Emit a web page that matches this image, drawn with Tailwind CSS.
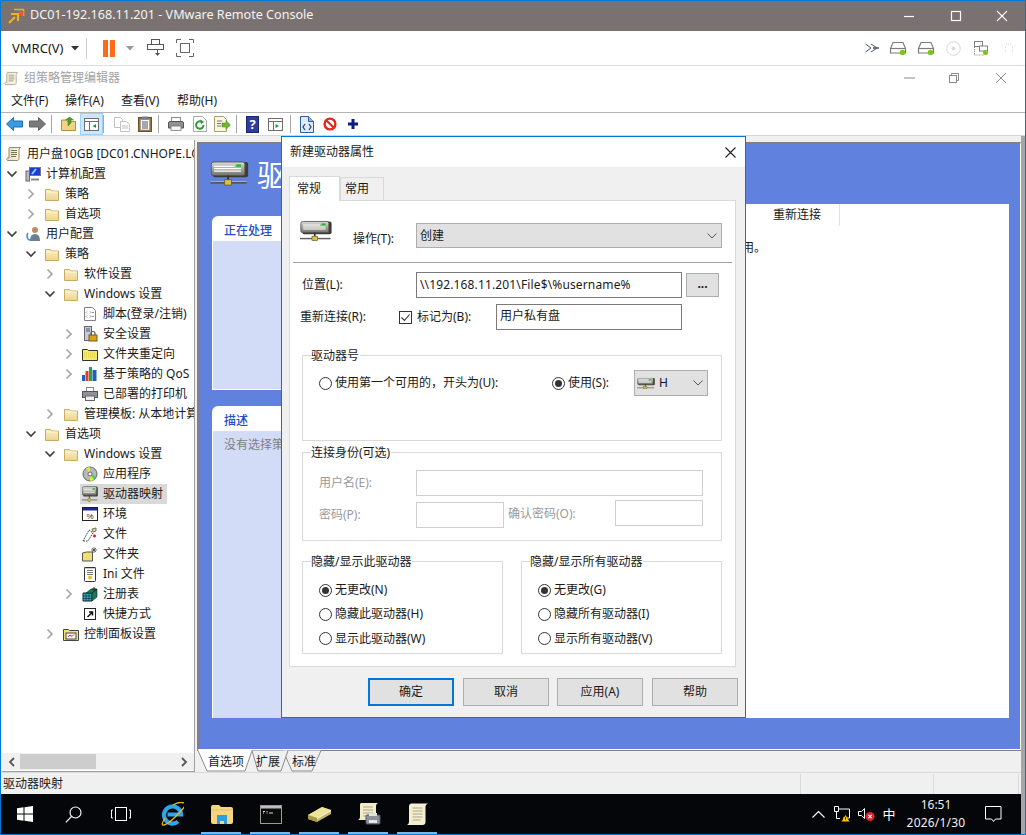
<!DOCTYPE html>
<html lang="zh-CN">
<head>
<meta charset="utf-8">
<title>VMware Remote Console</title>
<script src="https://cdn.jsdelivr.net/npm/@tailwindcss/browser@4"></script>
</head>
<body class="relative w-[1026px] h-[835px] overflow-hidden border border-[#0078d7] bg-white text-[12px] leading-none text-[#1a1a1a] font-['Noto_Sans','Noto_Sans_CJK_SC',sans-serif]">

<svg class="absolute w-0 h-0" aria-hidden="true">
  <defs>
    <linearGradient id="gd" x1="0" y1="0" x2="0" y2="1"><stop offset="0" stop-color="#dcdcd8"/><stop offset="1" stop-color="#74746e"/></linearGradient>
    <linearGradient id="gf" x1="0" y1="0" x2="0" y2="1"><stop offset="0" stop-color="#fbeec4"/><stop offset="1" stop-color="#efd48e"/></linearGradient>
    <linearGradient id="gs" x1="0" y1="0" x2="1" y2="0"><stop offset="0" stop-color="#e8dfb8"/><stop offset="1" stop-color="#fbf6df"/></linearGradient>
    <symbol id="chevR" viewBox="0 0 12 12"><path d="M3.5 1.5 8 6l-4.500 4.500" fill="none" stroke="#a6a6a6" stroke-width="1.700"/></symbol>
    <symbol id="chevD" viewBox="0 0 12 12"><path d="M1.500 3.500 6 8l4.500-4.500" fill="none" stroke="#404040" stroke-width="1.700"/></symbol>
    <symbol id="folder" viewBox="0 0 16 16"><path d="M1.500 3.500h5l1 1.500h7v9.500h-13z" fill="url(#gf)" stroke="#c9aa68"/><path d="M2.500 6h11" stroke="#fff8e0"/></symbol>
    <symbol id="scroll" viewBox="0 0 16 16"><path d="M4 1.500h10.500c-1.500 1-1.500 2-1.500 3v8c0 1.500-1 2-2 2H1.500c-1-.5-1-2 0-2.500H3V3c0-1 0-1.500 1-1.500z" fill="url(#gs)" stroke="#8f8a70"/><path d="M5 4.500h6M5 6.500h6M5 8.500h6M5 10.500h5" stroke="#77765f"/></symbol>
    <symbol id="drive" viewBox="0 0 40 26"><path d="M3 4.500Q3 1 6 1h31q2.500 0 2.500 3v10.500q0 2.500-2.500 2.500H5q-2 0-2-2z" fill="#3c3c38"/><path d="M1 3.500Q1 1 4 1h30q2 0 2 2.500v9.500q0 2-2 2H3q-2 0-2-2z" fill="url(#gd)" stroke="#55554f"/><path d="M4 5.500h21M4 8h28M4 10.500h28" stroke="#fff" stroke-width="1.300"/><rect x="27" y="3.500" width="5" height="2.500" fill="#18c020"/><path d="M18.500 15v7" stroke="#333" stroke-width="2"/><path d="M0 22.500h38" stroke="#444" stroke-width="1.600"/><path d="M0 21.500h38" stroke="#ccc" stroke-width=".800"/><rect x="15" y="19.500" width="7" height="5.500" fill="#d9c04c" stroke="#6a5a10" stroke-width=".800"/></symbol>
    <symbol id="doc" viewBox="0 0 16 16"><path d="M2.500 1.500h8l3 3v10h-11z" fill="#fff" stroke="#808080"/></symbol>
    <symbol id="green" viewBox="0 0 18 16"><path d="M4 2.500h10l2.500 6v4.500h-15V8.500z" fill="none" stroke="#7d7d7d" stroke-width="1.200"/><path d="M1.500 8.500h15" stroke="#7d7d7d" stroke-width="1.200"/><circle cx="13.500" cy="12.500" r="2.700" fill="#7ec31c"/></symbol>
  </defs>
</svg>

<!-- VMRC title bar -->
<header class="h-[30px] bg-[#7a7270] flex items-center text-[#f4f4f4] text-[12.6px]">
  <svg class="ml-[7px] w-[17px] h-[17px]" viewBox="0 0 17 17"><path d="M1 15 7 9M3 6h7v7" fill="none" stroke="#f4b01a" stroke-width="2.200"/><path d="M6 1.500h9.500V8" fill="none" stroke="#f4b01a" stroke-width="1.600"/><rect x="11" y="3" width="4.500" height="4.500" fill="#f0553a"/></svg>
  <span class="ml-[5px] -mt-[1px]">DC01-192.168.11.201 - VMware Remote Console</span>
  <div class="ml-auto flex items-center h-full">
    <svg class="w-[46px] h-[30px]" viewBox="0 0 46 30"><path d="M17 15.500h10" stroke="#fff" stroke-width="1.200"/></svg>
    <svg class="w-[46px] h-[30px]" viewBox="0 0 46 30"><rect x="18.500" y="10.500" width="9" height="9" fill="none" stroke="#fff" stroke-width="1.200"/></svg>
    <svg class="w-[46px] h-[30px]" viewBox="0 0 46 30"><path d="M18 10l10 10M28 10 18 20" stroke="#fff" stroke-width="1.100"/></svg>
  </div>
</header>

<!-- VMRC toolbar -->
<div class="h-[35px] border-b border-[#dcdcdc] flex items-center">
  <span class="ml-[11px] text-[13px]">VMRC(V)</span>
  <svg class="ml-[7px] w-[8px] h-[5px]" viewBox="0 0 8 5"><path d="M0 0h8L4 4.500z" fill="#333"/></svg>
  <div class="ml-[7px] w-px h-[21px] bg-[#cfcfcf]"></div>
  <div class="ml-[16px] flex gap-[2px]"><div class="w-[5px] h-[17px] bg-[#ff6a1a]"></div><div class="w-[5px] h-[17px] bg-[#ff6a1a]"></div></div>
  <svg class="ml-[11px] w-[8px] h-[5px]" viewBox="0 0 8 5"><path d="M0 0h8L4 4.500z" fill="#999"/></svg>
  <svg class="ml-[13px] w-[18px] h-[18px]" viewBox="0 0 18 18" fill="none" stroke="#555"><rect x="4.500" y=".500" width="8" height="5"/><rect x=".500" y="5.500" width="16" height="5"/><path d="M10.500 11v4"/><path d="M8 14h5l-2.500 3z" fill="#555" stroke="none"/></svg>
  <svg class="ml-[11px] w-[18px] h-[18px]" viewBox="0 0 18 18" fill="none" stroke="#666"><path d="M.5 4V.5H5M13 .5h4.500V4M17.500 14v3.500H13M5 17.500H.5V14"/><rect x="4.500" y="4.500" width="9" height="9"/></svg>
  <div class="ml-auto flex items-center">
    <svg class="w-[15px] h-[10px]" viewBox="0 0 15 10" fill="none" stroke="#44546a"><path d="M.5 1 6 5 .5 9M6 1l6 4-6 4"/><path d="M8 5h6" stroke-width="1.500"/></svg>
    <svg class="ml-[9px] w-[18px] h-[16px]" viewBox="0 0 18 16"><use href="#green"/></svg>
    <svg class="ml-[10px] w-[18px] h-[16px]" viewBox="0 0 18 16"><use href="#green"/></svg>
    <svg class="ml-[11px] w-[15px] h-[15px]" viewBox="0 0 15 15" fill="none" stroke="#d8d8d8"><circle cx="7.500" cy="7.500" r="6.800"/><circle cx="7.500" cy="7.500" r="1.500" fill="#d8d8d8"/></svg>
    <svg class="ml-[13px] w-[15px] h-[15px]" viewBox="0 0 15 15" fill="none" stroke="#808080"><rect x=".500" y=".500" width="8" height="5"/><rect x="5.500" y="5" width="8" height="5" fill="#fff"/><path d="M.5 6v8h9" stroke-dasharray="1 1"/><circle cx="11.500" cy="11.500" r="2.500" fill="#7ec31c" stroke="none"/></svg>
    <svg class="ml-[13px] mr-[9px] w-[14px] h-[10px]" viewBox="0 0 14 10" fill="none" stroke="#ddd" stroke-dasharray="1 1"><path d="M.5 3h3v6M13.500 3h-3v6M4 1h6"/></svg>
  </div>
</div>

<!-- MMC title -->
<div class="h-[24px] flex items-center">
  <svg class="ml-[3px] w-[15px] h-[15px] opacity-70" viewBox="0 0 16 16"><use href="#scroll"/></svg>
  <span class="ml-[5px] text-[#a3a3a3]">组策略管理编辑器</span>
  <div class="ml-auto flex items-center text-[#8a8a8a]">
    <svg class="w-[12px] h-[2px]" viewBox="0 0 12 2"><path d="M0 1h11" stroke="#9a9a9a" stroke-width="1.200"/></svg>
    <svg class="ml-[33px] w-[10px] h-[10px]" viewBox="0 0 10 10" fill="none" stroke="#8a8a8a"><rect x=".500" y="2.500" width="7" height="7"/><path d="M2.500 2.500v-2h7v7h-2"/></svg>
    <svg class="ml-[37px] mr-[19px] w-[10px] h-[10px]" viewBox="0 0 10 10" fill="none" stroke="#8a8a8a"><path d="M0 0l10 10M10 0 0 10"/></svg>
  </div>
</div>

<!-- menu -->
<nav class="h-[23px] border-b border-[#b4b4b4] flex items-center relative">
  <span class="ml-[10px] w-[54px]">文件(F)</span>
  <span class="w-[56px]">操作(A)</span>
  <span class="w-[56px]">查看(V)</span>
  <span>帮助(H)</span>
</nav>

<!-- MMC toolbar -->
<div class="h-[23px] border-b border-[#d4d4d4] flex items-center">
  <svg class="ml-[5px] w-[17px] h-[14px]" viewBox="0 0 17 14"><path d="M7.500.5v3.500h9v6h-9v3.500L.5 7z" fill="#3b9be0" stroke="#1d6fb0"/></svg>
  <svg class="ml-[6px] w-[17px] h-[14px]" viewBox="0 0 17 14"><path d="M9.500.5v3.500h-9v6h9v3.500L16.500 7z" fill="#7a7a7a" stroke="#666"/></svg>
  <div class="ml-[5px] w-px h-[18px] bg-[#a8a8a8]"></div>
  <svg class="ml-[9px] w-[15px] h-[14px]" viewBox="0 0 15 14"><path d="M.5 3h5l1 1.500h8v9H.5z" fill="#f1d286" stroke="#b0904a"/><path d="M7 9V3H4.500L8.500 0l4 3H10v3z" fill="#4ea020" stroke="#38801a" stroke-width=".500"/></svg>
  <div class="ml-[4px] w-[23px] h-[22px] bg-[#cce8ff] border border-[#99d1ff] flex items-center justify-center"><svg class="w-[15px] h-[13px]" viewBox="0 0 15 13" fill="none" stroke="#6d6d6d"><rect x=".500" y=".500" width="14" height="12" fill="#fff"/><path d="M.5 3.500h14M5.500 3.500v9" /><path d="M12 6v4L8.500 8z" fill="#1c9a3e" stroke="none"/></svg></div>
  <div class="w-px h-[18px] bg-[#a8a8a8]"></div>
  <svg class="ml-[10px] w-[16px] h-[15px] opacity-45" viewBox="0 0 16 15" fill="#fff" stroke="#777"><path d="M.5.500h6l2 2v8h-8z"/><path d="M6.500 4.500h6l3 3v7h-9z"/><path d="M8 9h6M8 11h6" /></svg>
  <svg class="ml-[8px] w-[14px] h-[16px]" viewBox="0 0 14 16"><rect x=".500" y="1.500" width="13" height="14" fill="#9c7440" stroke="#6f4e24"/><rect x="2.500" y="3.500" width="9" height="10.500" fill="#f8f8f8" stroke="#888" stroke-width=".500"/><rect x="4" y=".500" width="6" height="3" fill="#6d7f93"/><path d="M4 6h6M4 8h6M4 10h6M4 12h6" stroke="#556"/></svg>
  <div class="ml-[6px] w-px h-[18px] bg-[#a8a8a8]"></div>
  <svg class="ml-[9px] w-[16px] h-[14px]" viewBox="0 0 16 14"><rect x="3.500" y=".500" width="9" height="5" fill="#fff" stroke="#888"/><path d="M.5 6q0-1.500 1.500-1.500h12q1.500 0 1.500 1.500v5H.5z" fill="#8c9298" stroke="#555"/><rect x="3" y="9" width="10" height="4.500" fill="#f4f4f4" stroke="#666" stroke-width=".700"/></svg>
  <svg class="ml-[9px] w-[14px] h-[16px]" viewBox="0 0 14 16"><path d="M.5.500h9l4 4v11H.5z" fill="#fff" stroke="#aaa"/><path d="M10.500 9a3.700 3.700 0 1 1-1.500-3" fill="none" stroke="#2e9a30" stroke-width="2"/><path d="M7.500 3.500 11 6 8 8z" fill="#2e9a30"/></svg>
  <svg class="ml-[7px] w-[17px] h-[16px]" viewBox="0 0 17 16"><path d="M.5.500h9l3 3v12H.5z" fill="#fbf6df" stroke="#a8a070"/><path d="M3 5h5M3 7.500h4M3 10h4" stroke="#777"/><path d="M8 7h4V4.500L16.500 9 12 13.500V11H8z" fill="#6cb52d" stroke="#4b8a1c" stroke-width=".500"/></svg>
  <div class="ml-[5px] w-px h-[18px] bg-[#a8a8a8]"></div>
  <div class="ml-[9px] w-[13px] h-[17px] bg-[#2c3fa0] border border-[#1a2670] text-white text-[13px] font-bold flex items-center justify-center">?</div>
  <svg class="ml-[9px] w-[15px] h-[13px]" viewBox="0 0 15 13" fill="none" stroke="#6d6d6d"><rect x=".500" y=".500" width="14" height="12" fill="#fff"/><path d="M.5 3.500h14M5.500 3.500v9"/><path d="M7.500 6v4L11 8z" fill="#1c9a3e" stroke="none"/></svg>
  <div class="ml-[7px] w-px h-[18px] bg-[#a8a8a8]"></div>
  <svg class="ml-[9px] w-[14px] h-[17px]" viewBox="0 0 14 17"><path d="M.5.500h8l5 5v11H.5z" fill="#dfeaf8" stroke="#2f5f9a"/><path d="M8.500.5v5h5" fill="#8fb8e8" stroke="#2f5f9a"/><path d="M5 8 3 11l2 3M9 8l2 3-2 3" fill="none" stroke="#26406e" stroke-width="1.200"/></svg>
  <svg class="ml-[9px] w-[14px] h-[14px]" viewBox="0 0 14 14"><circle cx="7" cy="7" r="5.400" fill="#fff" stroke="#e0281e" stroke-width="2.400"/><path d="M3 3l8 8" stroke="#e0281e" stroke-width="2.200"/></svg>
  <svg class="ml-[11px] w-[10px] h-[10px]" viewBox="0 0 10 10"><path d="M3.500 0h3v3.500H10v3H6.500V10h-3V6.500H0v-3h3.500z" fill="#0a1a80"/></svg>
</div>

<!-- lower area with right strip -->
<div class="flex h-[698px]">
  <div class="w-[1020px] flex flex-col">
    <main class="h-[636px] bg-[#f0f0f0] flex pl-px">
      <!-- tree -->
      <aside class="mt-[4px] w-[193px] h-[632px] bg-white border-r border-b border-[#a0a0a0] flex flex-col">
        <div class="flex-1 pt-[4px] overflow-hidden whitespace-nowrap">
          <div class="h-5 flex items-center pl-[4px]"><svg class="w-4 h-4 mr-[5px] shrink-0"><use href="#scroll"/></svg><span>用户盘10GB [DC01.CNHOPE.LOCAL]</span></div>
          <div class="h-5 flex items-center pl-[4px]"><svg class="w-3 h-3 mr-[7px]"><use href="#chevD"/></svg><svg class="w-4 h-4 mr-[5px]" viewBox="0 0 16 16"><rect x="4.500" y="1.500" width="11" height="8" fill="#1a3fd0" stroke="#777"/><path d="M7 8l4-5" stroke="#8fd0ff" stroke-width="2"/><rect x="1" y="5" width="3.500" height="10" fill="#b8bcc0" stroke="#667"/><path d="M6 13.500h8" stroke="#888" stroke-width="2"/></svg><span>计算机配置</span></div>
          <div class="h-5 flex items-center pl-[23px]"><svg class="w-3 h-3 mr-[7px]"><use href="#chevR"/></svg><svg class="w-4 h-4 mr-[5px]"><use href="#folder"/></svg><span>策略</span></div>
          <div class="h-5 flex items-center pl-[23px]"><svg class="w-3 h-3 mr-[7px]"><use href="#chevR"/></svg><svg class="w-4 h-4 mr-[5px]"><use href="#folder"/></svg><span>首选项</span></div>
          <div class="h-5 flex items-center pl-[4px]"><svg class="w-3 h-3 mr-[7px]"><use href="#chevD"/></svg><svg class="w-4 h-4 mr-[5px]" viewBox="0 0 16 16"><circle cx="10" cy="4" r="3" fill="#c08a60"/><path d="M5 15q0-7 5-7t5 7z" fill="#6a7f95"/><path d="M3 7q-2 3 0 6 2 2 4 0" fill="none" stroke="#3a90d0" stroke-width="1.500"/></svg><span>用户配置</span></div>
          <div class="h-5 flex items-center pl-[23px]"><svg class="w-3 h-3 mr-[7px]"><use href="#chevD"/></svg><svg class="w-4 h-4 mr-[5px]"><use href="#folder"/></svg><span>策略</span></div>
          <div class="h-5 flex items-center pl-[42px]"><svg class="w-3 h-3 mr-[7px]"><use href="#chevR"/></svg><svg class="w-4 h-4 mr-[5px]"><use href="#folder"/></svg><span>软件设置</span></div>
          <div class="h-5 flex items-center pl-[42px]"><svg class="w-3 h-3 mr-[7px]"><use href="#chevD"/></svg><svg class="w-4 h-4 mr-[5px]"><use href="#folder"/></svg><span>Windows 设置</span></div>
          <div class="h-5 flex items-center pl-[80px]"><svg class="w-4 h-4 mr-[5px]" viewBox="0 0 16 16"><use href="#doc"/><path d="M5 5.500 4 6.500l1 1M8 5.500l1 1-1 1M5 9.500l-1 1 1 1M8 9.500l1 1-1 1M10 6.500h2M10 10.500h2" fill="none" stroke="#777" stroke-width=".800"/></svg><span>脚本(登录/注销)</span></div>
          <div class="h-5 flex items-center pl-[61px]"><svg class="w-3 h-3 mr-[7px]"><use href="#chevR"/></svg><svg class="w-4 h-4 mr-[5px]" viewBox="0 0 16 16"><rect x="2.500" y=".500" width="7" height="14" fill="#c4ccd4" stroke="#667"/><path d="M4 3h4M4 5h4" stroke="#556"/><rect x="7" y="9" width="8" height="6" fill="#d8a21c" stroke="#7a5a10"/><path d="M9 9V7q0-1.500 2-1.500T13 7v2" fill="none" stroke="#555" stroke-width="1.200"/></svg><span>安全设置</span></div>
          <div class="h-5 flex items-center pl-[61px]"><svg class="w-3 h-3 mr-[7px]"><use href="#chevR"/></svg><svg class="w-4 h-4 mr-[5px]" viewBox="0 0 16 16"><path d="M.5 3.500h5l1 1h9v10H.5z" fill="#f2ec66" stroke="#333"/><path d="M2 7h12M2 9h12M2 11h12" stroke="#d8cc40" stroke-dasharray="1 1"/></svg><span>文件夹重定向</span></div>
          <div class="h-5 flex items-center pl-[61px]"><svg class="w-3 h-3 mr-[7px]"><use href="#chevR"/></svg><svg class="w-4 h-4 mr-[5px]" viewBox="0 0 16 16"><rect y="9" width="3" height="6" fill="#1c60c0"/><rect x="3.500" y="5" width="3" height="10" fill="#e04020"/><rect x="7" y="1" width="3" height="14" fill="#30a040"/><rect x="10.500" y="4" width="4" height="11" fill="#1c60c0"/></svg><span>基于策略的 QoS</span></div>
          <div class="h-5 flex items-center pl-[80px]"><svg class="w-4 h-4 mr-[5px]" viewBox="0 0 16 14"><rect x="4.500" y=".500" width="7" height="4" fill="#fff" stroke="#888"/><rect x=".500" y="4.500" width="15" height="6" fill="#8c9298" stroke="#555"/><rect x="3.500" y="9" width="9" height="4.500" fill="#eee" stroke="#666"/></svg><span>已部署的打印机</span></div>
          <div class="h-5 flex items-center pl-[42px]"><svg class="w-3 h-3 mr-[7px] shrink-0"><use href="#chevR"/></svg><svg class="w-4 h-4 mr-[5px] shrink-0"><use href="#folder"/></svg><span class="shrink-0">管理模板: 从本地计算机检索</span></div>
          <div class="h-5 flex items-center pl-[23px]"><svg class="w-3 h-3 mr-[7px]"><use href="#chevD"/></svg><svg class="w-4 h-4 mr-[5px]"><use href="#folder"/></svg><span>首选项</span></div>
          <div class="h-5 flex items-center pl-[42px]"><svg class="w-3 h-3 mr-[7px]"><use href="#chevD"/></svg><svg class="w-4 h-4 mr-[5px]"><use href="#folder"/></svg><span>Windows 设置</span></div>
          <div class="h-5 flex items-center pl-[80px]"><svg class="w-4 h-4 mr-[5px]" viewBox="0 0 16 16"><circle cx="8" cy="8" r="7" fill="#b8b8b8" stroke="#666"/><path d="M8 8 4 2.500Q6 1 8 1zM8 8l4 5.500q-2 1.500-4 1.500z" fill="#e4e830"/><path d="M8 8l6 2-2 3.500z" fill="#40d080"/><circle cx="8" cy="8" r="2" fill="#fff" stroke="#666"/></svg><span>应用程序</span></div>
          <div class="h-5 flex items-center pl-[78px]"><div class="h-5 flex items-center pl-[2px] pr-[4px] bg-[#d9d9d9]"><svg class="w-4 h-4 mr-[5px]" viewBox="0 0 40 26" preserveAspectRatio="none"><use href="#drive"/></svg><span>驱动器映射</span></div></div>
          <div class="h-5 flex items-center pl-[80px]"><svg class="w-4 h-4 mr-[5px]" viewBox="0 0 16 16"><rect x=".500" y="1.500" width="15" height="13" fill="#fff" stroke="#222"/><rect x="1" y="2" width="14" height="2.500" fill="#1a2a90"/><text x="8" y="13" text-anchor="middle" font-size="8" font-family="Liberation Sans" fill="#222">%</text></svg><span>环境</span></div>
          <div class="h-5 flex items-center pl-[80px]"><svg class="w-4 h-4 mr-[5px]" viewBox="0 0 16 16"><path d="M1 15 7 4l4 3-5 8z" fill="#fff" stroke="#333" stroke-dasharray="1.500 1"/><path d="M10 3l4-1v3l-3 1z" fill="#e8d480" stroke="#776"/><path d="M11 10h3M12.500 8.500v3" stroke="#e01818" stroke-width="1.500"/></svg><span>文件</span></div>
          <div class="h-5 flex items-center pl-[80px]"><svg class="w-4 h-4 mr-[5px]" viewBox="0 0 16 16"><path d="M.5 7l4-1h6v9H.5z" fill="#f0e070" stroke="#555"/><path d="M12 1v6M9 4h6M10 2l4 4M14 2l-4 4" stroke="#444" stroke-width=".800"/></svg><span>文件夹</span></div>
          <div class="h-5 flex items-center pl-[80px]"><svg class="w-4 h-4 mr-[5px]" viewBox="0 0 16 16"><rect x="2.500" y="1.500" width="11" height="14" rx="1" fill="#fff" stroke="#333"/><path d="M5 4.500h6M5 6.500h6M5 8.500h6" stroke="#777"/><circle cx="8" cy="11.500" r="2" fill="#e0c030"/><path d="M3 1v1.500M5 1v1.500M7 1v1.500M9 1v1.500M11 1v1.500M13 1v1.500" stroke="#333"/></svg><span>Ini 文件</span></div>
          <div class="h-5 flex items-center pl-[61px]"><svg class="w-3 h-3 mr-[7px]"><use href="#chevR"/></svg><svg class="w-4 h-4 mr-[5px]" viewBox="0 0 16 16"><path d="M1 7h9v8H1z" fill="#30b0b8" stroke="#123"/><path d="M1 10h9M1 12.500h9M4 7v8M7 7v8" stroke="#123" stroke-width=".600"/><path d="M4 7l5-4h6l-5 4zM10 7l5-4v8l-5 4z" fill="#1a7a50" stroke="#123" stroke-width=".600"/><path d="M12 1v4M10 3h4" stroke="#333"/></svg><span>注册表</span></div>
          <div class="h-5 flex items-center pl-[80px]"><svg class="w-4 h-4 mr-[5px]" viewBox="0 0 16 16"><rect x="2.500" y="2.500" width="11" height="11" fill="#fff" stroke="#222"/><path d="M5.500 11 10 6.500M7 6h3.500v3.500" fill="none" stroke="#111" stroke-width="1.500"/></svg><span>快捷方式</span></div>
          <div class="h-5 flex items-center pl-[42px]"><svg class="w-3 h-3 mr-[7px]"><use href="#chevR"/></svg><svg class="w-4 h-4 mr-[5px]" viewBox="0 0 16 16"><path d="M.5 3.500h5l1 1h9v10H.5z" fill="#f2e27a" stroke="#444"/><rect x="3" y="7" width="10" height="6" fill="#fff" stroke="#444"/><path d="M5 11l2-2 2 1.500 2-2" fill="none" stroke="#d02020"/></svg><span>控制面板设置</span></div>
        </div>
        <div class="h-[17px] mb-[1px] bg-[#f0f0f0] flex items-center">
          <svg class="ml-[6px] w-2 h-[10px]" viewBox="0 0 8 10"><path d="M6 1 2 5l4 4" fill="none" stroke="#555" stroke-width="1.800"/></svg>
          <div class="ml-[4px] w-[76px] h-[15px] bg-[#cdcdcd]"></div>
          <svg class="ml-auto mr-[6px] w-2 h-[10px]" viewBox="0 0 8 10"><path d="M2 1l4 4-4 4" fill="none" stroke="#555" stroke-width="1.800"/></svg>
        </div>
      </aside>

      <!-- right column -->
      <div class="ml-[2px] w-[824px] pt-[6px] flex flex-col">
        <section class="h-[608px] bg-[#6082de] border-t-2 border-l-2 border-t-[#808080] border-l-[#808080] border-r border-b border-r-white border-b-white">
          <div class="h-[60px] flex items-start pl-[11px] pt-[17px]">
            <svg class="w-[39px] h-[25px]" viewBox="0 0 40 26"><use href="#drive"/></svg>
            <span class="ml-[8px] text-white text-[30px] leading-[28px] whitespace-nowrap">驱动器映射</span>
          </div>
          <div class="flex h-[514px] pl-[13px]">
            <div class="w-[185px] pt-[12px] flex flex-col gap-[16px]">
              <div class="h-[174px] bg-white rounded-tl-md flex flex-col pb-[1px] pl-[1px]">
                <div class="h-[25px] shrink-0 flex items-center pl-[11px] pt-[5px] text-[#2450c8] font-medium">正在处理</div>
                <div class="flex-1 bg-[#d3dcf6]"></div>
              </div>
              <div class="flex-1 bg-white rounded-tl-md flex flex-col pl-[1px]">
                <div class="h-[25px] shrink-0 flex items-center pl-[11px] pt-[5px] text-[#2450c8] font-medium">描述</div>
                <div class="flex-1 bg-[#d3dcf6] pl-[11px] pt-[8px] text-[#808080]">没有选择策略</div>
              </div>
            </div>
            <div class="ml-[13px] w-[599px] bg-white">
              <div class="h-[22px] flex justify-end items-center pr-[169px]"><span class="pr-[18px] border-r border-[#e0e0e0] leading-[22px]">重新连接</span></div>
              <div class="pl-[332px] pt-[16px]">用。</div>
            </div>
          </div>
        </section>
        <div class="h-[22px] relative border-t border-[#808080]">
          <svg class="absolute left-0 -top-px w-[128px] h-[22px]" viewBox="0 0 128 22" stroke="#8c8c8c">
            <path d="M86 .5 95 21h20l9-20.500" fill="#f0f0f0"/>
            <path d="M55 .5 61 21h23l7-20.500" fill="#f0f0f0"/>
            <path d="M1 .5 10 21h38l7-20.500" fill="#fff"/>
            <path d="M1.500 .5h53" stroke="#fff" stroke-width="2"/>
          </svg>
          <div class="relative h-[21px] flex items-center pt-[1px] text-[12px]"><span class="ml-[11px]">首选项</span><span class="ml-[12px]">扩展</span><span class="ml-[12px]">标准</span></div>
        </div>
      </div>
    </main>

    <!-- status -->
    <footer class="h-[22px] bg-[#f0f0f0] border-t border-[#d9d9d9] flex items-center">
      <span class="ml-[2px] w-[797px]">驱动器映射</span>
      <div class="w-px h-[20px] bg-[#d9d9d9]"></div>
      <div class="w-[132px]"></div>
      <div class="w-px h-[20px] bg-[#d9d9d9]"></div>
      <div class="w-[84px]"></div>
      <div class="w-px h-[20px] bg-[#d9d9d9]"></div>
    </footer>

    <!-- taskbar -->
    <div class="h-[40px] bg-[#05060a] flex items-center text-white">
      <div class="w-[48px] h-full flex items-center justify-center"><svg class="w-[16px] h-[16px]" viewBox="0 0 16 16" fill="#fff"><path d="M0 2.300 6.500 1.300V7.500H0zM7.500 1.200 16 0V7.500H7.500zM0 8.500h6.500v6.200L0 13.700zM7.500 8.500H16V16l-8.500-1.200z"/></svg></div>
      <div class="w-[48px] h-full flex items-center justify-center"><svg class="w-[17px] h-[17px]" viewBox="0 0 17 17" fill="none" stroke="#fff" stroke-width="1.100"><circle cx="10.500" cy="6.500" r="5.500"/><path d="M6.500 10.500 .8 16.300"/></svg></div>
      <div class="w-[48px] h-full flex items-center justify-center"><svg class="w-[20px] h-[14px]" viewBox="0 0 20 14" fill="none" stroke="#fff"><rect x="4.500" y=".5" width="11" height="13"/><path d="M2 3H.5v8H2M18 3h1.500v8H18"/></svg></div>
      <div class="ml-[3px] w-[48px] h-full flex items-center justify-center"><svg class="w-[23px] h-[24px]" viewBox="0 0 23 24" fill="none"><path d="M6.500 12.500H20a8.500 8.500 0 1 0-3 7" stroke="#2ea6e8" stroke-width="4.200"/><path d="M4 16Q-1 24 3 23q5-1 16-13T22 1Q19-1 12 3" stroke="#e8b820" stroke-width="1.300"/></svg></div>
      <div class="ml-px relative w-[49px] h-full flex items-center justify-center"><svg class="w-[22px] h-[19px]" viewBox="0 0 22 19"><path d="M0 2q0-2 2-2h6l2 2h10q2 0 2 2v13q0 2-2 2H2q-2 0-2-2z" fill="#f5d67e"/><path d="M0 5h22" stroke="#e8c060"/><path d="M6 19v-7h10v7h-3v-3H9v3z" fill="#2b9fe0"/><rect x="6" y="10" width="10" height="4" fill="#2b9fe0"/></svg><div class="absolute left-[4px] right-[5px] bottom-0 h-[2px] bg-[#76b9ed]"></div></div>
      <div class="relative w-[49px] h-full flex items-center justify-center"><svg class="w-[22px] h-[19px]" viewBox="0 0 22 19"><rect x=".5" y=".5" width="21" height="18" fill="#0a0a0a" stroke="#9a9a9a"/><rect x="1" y="1" width="20" height="2.500" fill="#bdbdbd"/><path d="M3 6.500h2M3 8h1M6.500 6.500h1M6.500 8h1M9 8h4" stroke="#ddd"/></svg><div class="absolute left-[4px] right-[5px] bottom-0 h-[2px] bg-[#76b9ed]"></div></div>
      <div class="relative w-[49px] h-full flex items-center justify-center"><svg class="w-[24px] h-[15px]" viewBox="0 0 24 15"><path d="M0 8 14 0l9 3v4L9 15 0 12z" fill="#c8b860"/><path d="M0 8l9 3 14-8-9-3z" fill="#ede49a"/><path d="M0 8l9 3v4L0 12z" fill="#a89a40"/><path d="M9 11 23 3v1L9 12z" fill="#fff"/></svg><div class="absolute left-[4px] right-[5px] bottom-0 h-[2px] bg-[#76b9ed]"></div></div>
      <div class="relative w-[49px] h-full flex items-center justify-center"><svg class="w-[24px] h-[24px]" viewBox="0 0 24 24"><path d="M4 1h17q-2 1-2 3v14H1q2-1 2-3V3q0-2 1-2z" fill="#f2ecc8"/><path d="M6 5h10M6 8h10M6 11h10M6 14h8" stroke="#a8a58a"/><rect x="9" y="13" width="14" height="9" rx="1" fill="#8a939c" stroke="#525a62"/><rect x="12" y="11" width="8" height="3" fill="#dfe3e6"/><rect x="12" y="18" width="8" height="3" fill="#e8e8e8"/></svg><div class="absolute left-[4px] right-[5px] bottom-0 h-[2px] bg-[#76b9ed]"></div></div>
      <div class="relative w-[49px] h-full flex items-center justify-center"><svg class="w-[21px] h-[23px]" viewBox="0 0 21 23"><path d="M4 .5h17q-2.500 1-2.500 3V19q0 3-3 3H0q2-1 2-3V3q0-2 2-2.500z" fill="#f5efcf"/><path d="M5.500 5h10M5.500 8h10M5.500 11h10M5.500 14h10M5.500 17h8" stroke="#a8a58a"/></svg><div class="absolute left-[4px] right-[5px] bottom-0 h-[2px] bg-[#76b9ed]"></div></div>
      <div class="ml-auto flex items-center h-full">
        <div class="w-[24px] flex justify-center"><svg class="w-[13px] h-[8px]" viewBox="0 0 13 8" fill="none" stroke="#fff" stroke-width="1.100"><path d="M.5 7.500l6-6 6 6"/></svg></div>
        <div class="w-[24px] flex justify-center"><svg class="w-[17px] h-[16px]" viewBox="0 0 17 16"><path d="M.5.500h4v5h-4zM4.500 3h11v9H9" fill="none" stroke="#fff"/><path d="M2.500 5.500v7H6" fill="none" stroke="#fff"/><path d="M11.500 9 15.500 15.500h-8z" fill="#f8c000"/><path d="M11.500 11v2.500" stroke="#222"/></svg></div>
        <div class="w-[24px] flex justify-center"><svg class="w-[17px] h-[16px]" viewBox="0 0 17 16"><path d="M.5 5.500h3l3-3v10l-3-3h-3z" fill="none" stroke="#fff"/><circle cx="12" cy="10.500" r="4.500" fill="#e0242c"/><path d="M10.300 8.800l3.400 3.400M13.700 8.800l-3.400 3.400" stroke="#fff" stroke-width="1.100"/></svg></div>
        <div class="w-[22px] text-center text-[13px] text-white">中</div>
        <div class="w-[72px] flex flex-col items-center gap-[6px] text-[12px] text-[#f0f0f0]"><span>16:51</span><span class="tracking-[0.2px]">2026/1/30</span></div>
        <div class="w-[42px] flex justify-center"><svg class="w-[17px] h-[17px]" viewBox="0 0 17 17"><path d="M.5.500h15.500v12.500h-5.500l-2 2.500-2-2.500H.5z" fill="none" stroke="#fff"/></svg></div>
        <div class="w-[7px]"></div>
      </div>
    </div>
  </div>
  <div class="w-[4px] h-full bg-[#a6a6a6]"></div>
</div>

<!-- dialog -->
<div class="absolute left-[280px] top-[135px] w-[465px] h-[582px] border border-[#0078d7] bg-[#f0f0f0] flex flex-col">
  <div class="h-[30px] bg-white flex items-center shrink-0">
    <span class="ml-[8px]">新建驱动器属性</span>
    <svg class="ml-auto mr-[9px] w-[11px] h-[11px]" viewBox="0 0 11 11"><path d="M.5.500l10 10M10.500.500l-10 10" stroke="#222" stroke-width="1.100"/></svg>
  </div>
  <div class="h-[33px] flex items-end pl-[7px] shrink-0 relative z-10">
    <div class="w-[51px] h-[25px] bg-white border border-b-0 border-[#d9d9d9] flex items-center pl-[7px] -mb-px">常规</div>
    <div class="w-[44px] h-[23px] bg-[#f0f0f0] border border-b-0 border-[#d9d9d9] flex items-center pl-[4px]">常用</div>
  </div>
  <!-- panel -->
  <div class="ml-[7px] w-[447px] h-[467px] bg-white border border-[#d9d9d9] shrink-0">
    <div class="flex items-start pl-[10px] pt-[22px]">
      <svg class="-mt-[3px] w-[32px] h-[22px]" viewBox="0 0 40 26"><use href="#drive"/></svg>
      <span class="ml-[21px] w-[63px] pt-[10px]">操作(T):</span>
      <div class="w-[306px] h-[25px] bg-[#e1e1e1] border border-[#adadad] flex items-center pl-[3px]"><span>创建</span><svg class="ml-auto mr-[4px] w-[10px] h-[6px]" viewBox="0 0 10 6"><path d="M.5.500l4.500 4.500 4.500-4.500" fill="none" stroke="#555"/></svg></div>
    </div>
    <div class="mt-[14px] mx-[3px] border-t border-[#a0a0a0]"></div>
    <div class="mt-[9px] flex items-center pl-[12px]">
      <span class="w-[114px]">位置(L):</span>
      <div class="w-[266px] h-[26px] border border-[#7a7a7a] flex items-center pl-[3px] whitespace-nowrap tracking-[0.14px]">\\192.168.11.201\File$\%username%</div>
      <div class="ml-[4px] w-[33px] h-[24px] bg-[#e1e1e1] border border-[#adadad] flex items-center justify-center font-bold pb-[2px]">...</div>
    </div>
    <div class="mt-[6px] flex items-center pl-[10px]">
      <span class="w-[99px]">重新连接(R):</span>
      <svg class="w-[13px] h-[13px]" viewBox="0 0 13 13"><rect x=".5" y=".5" width="12" height="12" fill="#fff" stroke="#333"/><path d="M2.500 6.500l3 3 5-6" fill="none" stroke="#333" stroke-width="1.100"/></svg>
      <span class="ml-[5px] w-[79px]">标记为(B):</span>
      <div class="w-[186px] h-[26px] border border-[#7a7a7a] flex items-center pl-[3px] pb-[3px]">用户私有盘</div>
    </div>
    <!-- group drive -->
    <fieldset class="mt-[25px] mx-[12px] w-[420px] h-[86px] border border-[#d9d9d9] relative">
      <span class="absolute -top-[6px] left-[8px] bg-white pr-[1px]">驱动器号</span>
      <div class="mt-[14px] flex items-center h-[26px] pl-[16px]">
        <span class="w-[13px] h-[13px] rounded-full border border-[#333] bg-white"></span>
        <span class="ml-[3px] w-[217px] -mt-[1px]">使用第一个可用的，开头为(U):</span>
        <span class="w-[13px] h-[13px] rounded-full border border-[#333] bg-white flex items-center justify-center"><span class="w-[7px] h-[7px] rounded-full bg-[#333]"></span></span>
        <span class="ml-[3px] w-[66px] -mt-[1px]">使用(S):</span>
        <div class="w-[74px] h-[26px] bg-[#e1e1e1] border border-[#adadad] flex items-center pl-[2px]">
          <svg class="w-[18px] h-[13px]" viewBox="0 0 40 26"><use href="#drive"/></svg>
          <span class="ml-[4px] text-[#101040]">H</span>
          <svg class="ml-auto mr-[4px] w-[10px] h-[6px]" viewBox="0 0 10 6"><path d="M.5.500l4.500 4.500 4.500-4.500" fill="none" stroke="#555"/></svg>
        </div>
      </div>
    </fieldset>
    <!-- group credentials -->
    <fieldset class="mt-[11px] mx-[12px] w-[420px] h-[89px] border border-[#d9d9d9] relative text-[#9a9a9a]">
      <span class="absolute -top-[6px] left-[8px] bg-white pr-[1px] text-[#1a1a1a]">连接身份(可选)</span>
      <div class="mt-[17px] flex items-center pl-[16px]">
        <span class="w-[97px]">用户名(E):</span>
        <div class="w-[287px] h-[26px] border border-[#cfcfcf]"></div>
      </div>
      <div class="mt-[6px] flex items-center pl-[16px]">
        <span class="w-[97px]">密码(P):</span>
        <div class="w-[88px] h-[26px] border border-[#cfcfcf]"></div>
        <span class="ml-[4px] w-[107px] -mt-[3px]">确认密码(O):</span>
        <div class="w-[88px] h-[26px] -mt-[4px] border border-[#cfcfcf]"></div>
      </div>
    </fieldset>
    <!-- group hide -->
    <div class="mt-[20px] mx-[12px] flex gap-[18px]">
      <fieldset class="w-[201px] h-[93px] border border-[#d9d9d9] relative pt-[16px] pl-[16px]">
        <span class="absolute -top-[6px] left-[8px] bg-white pr-[1px]">隐藏/显示此驱动器</span>
        <div class="h-[24px] flex items-center"><span class="w-[13px] h-[13px] rounded-full border border-[#333] flex items-center justify-center"><span class="w-[7px] h-[7px] rounded-full bg-[#333]"></span></span><span class="ml-[3px]">无更改(N)</span></div>
        <div class="h-[24px] flex items-center"><span class="w-[13px] h-[13px] rounded-full border border-[#333]"></span><span class="ml-[3px]">隐藏此驱动器(H)</span></div>
        <div class="h-[25px] flex items-center"><span class="w-[13px] h-[13px] rounded-full border border-[#333]"></span><span class="ml-[3px]">显示此驱动器(W)</span></div>
      </fieldset>
      <fieldset class="w-[201px] h-[93px] border border-[#d9d9d9] relative pt-[16px] pl-[16px]">
        <span class="absolute -top-[6px] left-[8px] bg-white pr-[1px]">隐藏/显示所有驱动器</span>
        <div class="h-[24px] flex items-center"><span class="w-[13px] h-[13px] rounded-full border border-[#333] flex items-center justify-center"><span class="w-[7px] h-[7px] rounded-full bg-[#333]"></span></span><span class="ml-[3px]">无更改(G)</span></div>
        <div class="h-[24px] flex items-center"><span class="w-[13px] h-[13px] rounded-full border border-[#333]"></span><span class="ml-[3px]">隐藏所有驱动器(I)</span></div>
        <div class="h-[25px] flex items-center"><span class="w-[13px] h-[13px] rounded-full border border-[#333]"></span><span class="ml-[3px]">显示所有驱动器(V)</span></div>
      </fieldset>
    </div>
  </div>
  <div class="mt-[11px] flex justify-end pr-[7px]">
    <div class="w-[86px] h-[28px] bg-[#e1e1e1] border-2 border-[#0078d7] flex items-center justify-center">确定</div>
    <div class="ml-[9px] w-[86px] h-[28px] bg-[#e1e1e1] border border-[#adadad] flex items-center justify-center">取消</div>
    <div class="ml-[8px] w-[86px] h-[28px] bg-[#e1e1e1] border border-[#adadad] flex items-center justify-center">应用(A)</div>
    <div class="ml-[9px] w-[86px] h-[28px] bg-[#e1e1e1] border border-[#adadad] flex items-center justify-center">帮助</div>
  </div>
</div>
</body>
</html>
